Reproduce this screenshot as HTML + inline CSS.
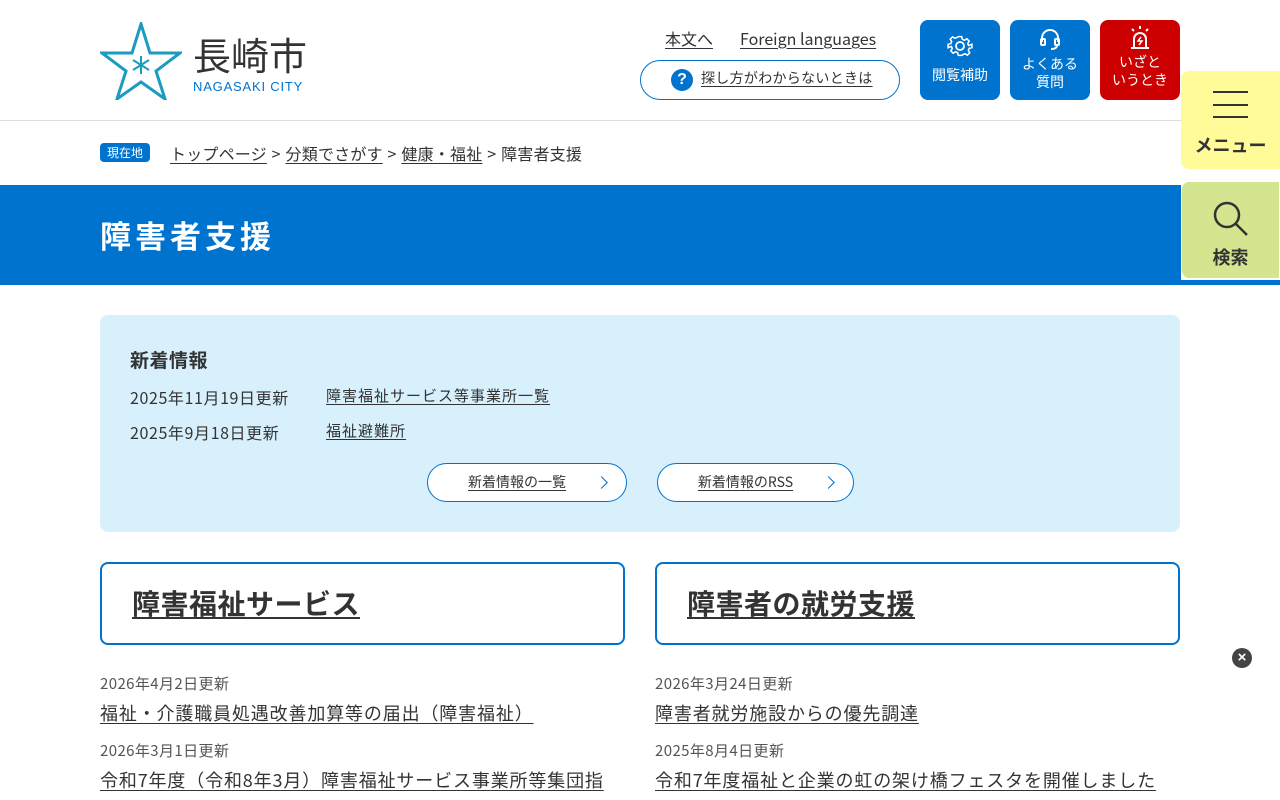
<!DOCTYPE html>
<html><head><meta charset="utf-8"><style>
*{margin:0;padding:0;box-sizing:border-box}
body{width:1280px;height:800px;overflow:hidden;position:relative;background:#fff;font-family:"Liberation Sans","Noto Sans CJK JP",sans-serif;color:#333}
a{color:#333;text-decoration:underline;text-underline-offset:3px}
.abs{position:absolute}
.hdr-line{position:absolute;top:120px;left:0;width:1280px;height:1px;background:#ddd}
.btn{position:absolute;top:20px;width:80px;height:80px;border-radius:8px;background:#0073cf;color:#fff;font-size:14px;line-height:18px;text-align:center;font-family:"Noto Sans CJK JP",sans-serif}
.side{position:absolute;left:1181px;width:99px;border-radius:8px 0 0 8px;text-align:center;font-weight:bold;font-size:18px;font-family:"Noto Sans CJK JP",sans-serif;color:#333}
.crumb{position:absolute;top:141px;font-size:16px;font-family:"Noto Sans CJK JP",sans-serif;color:#333;letter-spacing:0.2px;word-spacing:1px}
.card{position:absolute;top:562px;width:525px;height:83px;border:2px solid #0073cf;border-radius:8px;padding:20px 30px}
.card a{font-size:28px;font-weight:bold;font-family:"Noto Sans CJK JP",sans-serif;line-height:38px;letter-spacing:0.5px}
.d{position:absolute;font-size:15px;color:#555;font-family:"Noto Sans CJK JP",sans-serif;letter-spacing:0.4px}
.l{position:absolute;font-size:18px;font-family:"Noto Sans CJK JP",sans-serif;white-space:nowrap;letter-spacing:0.85px}
.pill{position:absolute;top:463px;height:39px;border:1px solid #0073cf;border-radius:20px;background:#fff;font-size:14px;font-family:"Noto Sans CJK JP",sans-serif;line-height:37px;text-align:center}
.chev{position:absolute;right:20px;top:14px;width:9px;height:9px;border-top:1.5px solid #0073cf;border-right:1.5px solid #0073cf;transform:rotate(45deg)}
</style></head><body>
<svg class="abs" style="left:100px;top:22px" width="82" height="78" viewBox="0 0 82 78">
<polygon points="41,2 50,31 80,31 56,49 65,77 41,60 17,77 26,49 2,31 32,31" fill="none" stroke="#1a9bc0" stroke-width="3" stroke-linejoin="miter"/>
<g stroke="#1a9bc0" stroke-width="2"><line x1="41" y1="34" x2="41" y2="52"/><line x1="33" y1="38" x2="49" y2="48"/><line x1="33" y1="48" x2="49" y2="38"/></g>
</svg>
<div class="abs" style="left:193px;top:32px;font-size:38px;line-height:44px;font-family:'Noto Sans CJK JP',sans-serif;color:#333">長崎市</div>
<div class="abs" style="left:193px;top:79px;font-size:13px;letter-spacing:0.8px;color:#0073cf">NAGASAKI CITY</div>
<a class="abs" style="left:665px;top:26px;font-size:16px;font-family:'Noto Sans CJK JP',sans-serif">本文へ</a>
<a class="abs" style="left:740px;top:26px;font-size:16px;font-family:'Noto Sans CJK JP',sans-serif">Foreign languages</a>
<div class="abs" style="left:640px;top:60px;width:260px;height:40px;border:1px solid #0073cf;border-radius:20px"></div>
<div class="abs" style="left:671px;top:69px;width:22px;height:22px;border-radius:50%;background:#0073cf;color:#fff;font-weight:bold;font-size:16px;text-align:center;line-height:22px">?</div>
<a class="abs" style="left:701px;top:68px;font-size:14px;font-family:'Noto Sans CJK JP',sans-serif;letter-spacing:0.3px">探し方がわからないときは</a>
<div class="btn" style="left:920px"><svg style="margin-top:12px" width="28" height="28" viewBox="0 0 28 28" fill="none" stroke="#fff" stroke-width="1.8"><circle cx="14" cy="14" r="4"/><path d="M12 3h4l.8 3.2 2.4 1 2.8-1.7 2.8 2.8-1.7 2.8 1 2.4L28 12v4l-3.2.8-1 2.4 1.7 2.8-2.8 2.8-2.8-1.7-2.4 1L16 25h-4l-.8-3.2-2.4-1-2.8 1.7-2.8-2.8 1.7-2.8-1-2.4L0 16v-4l3.2-.8 1-2.4-1.7-2.8 2.8-2.8 2.8 1.7 2.4-1z" transform="translate(14 14) scale(0.85) translate(-14 -14)"/></svg><div style="margin-top:2px">閲覧補助</div></div>
<div class="btn" style="left:1010px"><svg style="margin-top:7px" width="24" height="26" viewBox="0 0 24 26" fill="none" stroke="#fff" stroke-width="2"><path d="M4 15V11a8 8 0 0116 0v4"/><rect x="3" y="12" width="4" height="6" rx="1"/><rect x="17" y="12" width="4" height="6" rx="1"/><path d="M19 18q0 4-6 4"/></svg><div style="margin-top:-2px">よくある<br>質問</div></div>
<div class="btn" style="left:1100px;background:#cc0000"><svg style="margin-top:5px" width="26" height="26" viewBox="0 0 26 26" fill="none" stroke="#fff" stroke-width="2"><path d="M7 22V14a6 6 0 0112 0v8M4 23h18M13 1v3M5 4l2 2M21 4l-2 2"/><path d="M14 12l-3 4h4l-3 4" stroke-width="1.5"/></svg><div style="margin-top:-2px">いざと<br>いうとき</div></div>
<div class="hdr-line"></div>
<div class="side" style="top:71px;height:98px;background:#fffb99"><div style="margin:20px auto 0;width:35px;height:27px;border-top:2px solid #333;border-bottom:2px solid #333;position:relative"><div style="position:absolute;top:11px;left:0;width:35px;height:2px;background:#333"></div></div><div style="margin-top:14px">メニュー</div></div>
<div class="side" style="top:181px;height:98px;background:#d4e590;border:1px solid #fff"><svg style="margin-top:18px" width="38" height="38" viewBox="0 0 38 38" fill="none" stroke="#333" stroke-width="2.5"><circle cx="15" cy="15" r="12"/><path d="M24 24l11 11"/></svg><div style="margin-top:0px">検索</div></div>
<div class="abs" style="left:100px;top:143px;width:50px;height:19px;background:#0073cf;border-radius:4px;color:#fff;font-size:12px;text-align:center;line-height:19px;font-family:'Noto Sans CJK JP',sans-serif">現在地</div>
<div class="crumb" style="left:170px"><a>トップページ</a> &gt; <a>分類でさがす</a> &gt; <a>健康・福祉</a> &gt; 障害者支援</div>
<div class="abs" style="left:0;top:185px;width:1181px;height:100px;background:#0073cf"></div>
<div class="abs" style="left:1181px;top:280px;width:99px;height:5px;background:#0073cf"></div>
<div class="abs" style="left:100px;top:213px;font-size:31px;font-weight:bold;color:#fff;font-family:'Noto Sans CJK JP',sans-serif;letter-spacing:4px;line-height:44px">障害者支援</div>
<div class="abs" style="left:100px;top:315px;width:1080px;height:217px;background:#d7f0fc;border-radius:8px"></div>
<div class="abs" style="left:130px;top:346px;font-size:19px;font-weight:bold;font-family:'Noto Sans CJK JP',sans-serif;letter-spacing:0.5px">新着情報</div>
<div class="abs" style="left:130px;top:385px;font-size:16px;font-family:'Noto Sans CJK JP',sans-serif;letter-spacing:0.6px">2025年11月19日更新</div>
<a class="abs" style="left:326px;top:385px;font-size:15px;font-family:'Noto Sans CJK JP',sans-serif;letter-spacing:1px">障害福祉サービス等事業所一覧</a>
<div class="abs" style="left:130px;top:420px;font-size:16px;font-family:'Noto Sans CJK JP',sans-serif;letter-spacing:0.6px">2025年9月18日更新</div>
<a class="abs" style="left:326px;top:420px;font-size:15px;font-family:'Noto Sans CJK JP',sans-serif;letter-spacing:1px">福祉避難所</a>
<div class="pill" style="left:427px;width:200px"><a style="margin-right:20px">新着情報の一覧</a><span class="chev"></span></div>
<div class="pill" style="left:657px;width:197px"><a style="margin-right:20px">新着情報のRSS</a><span class="chev"></span></div>
<div class="card" style="left:100px"><a>障害福祉サービス</a></div>
<div class="card" style="left:655px"><a>障害者の就労支援</a></div>
<div class="d" style="left:100px;top:673px">2026年4月2日更新</div>
<a class="l" style="left:100px;top:700px">福祉・介護職員処遇改善加算等の届出（障害福祉）</a>
<div class="d" style="left:100px;top:740px">2026年3月1日更新</div>
<a class="l" style="left:100px;top:767px">令和7年度（令和8年3月）障害福祉サービス事業所等集団指</a>
<div class="d" style="left:655px;top:673px">2026年3月24日更新</div>
<a class="l" style="left:655px;top:700px">障害者就労施設からの優先調達</a>
<div class="d" style="left:655px;top:740px">2025年8月4日更新</div>
<a class="l" style="left:655px;top:767px">令和7年度福祉と企業の虹の架け橋フェスタを開催しました</a>
<div class="abs" style="left:1232px;top:648px;width:20px;height:20px;border-radius:50%;background:#444;color:#fff;font-size:15px;font-weight:bold;text-align:center;line-height:20px">×</div>
</body></html>
